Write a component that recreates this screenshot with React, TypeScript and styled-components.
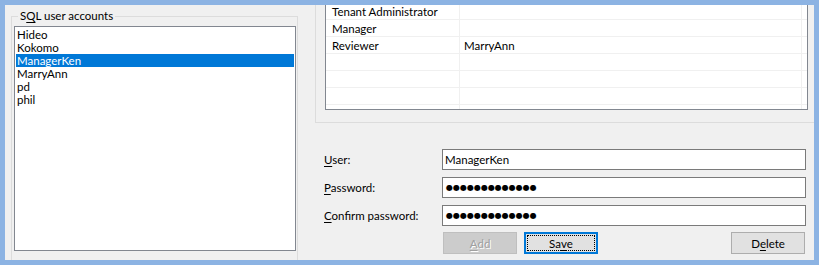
import styled, { createGlobalStyle } from "styled-components";

const GlobalStyle = createGlobalStyle`
  html, body {
    margin: 0;
    padding: 0;
    background: #8cb3e3;
  }
  * {
    box-sizing: border-box;
  }
`;

const accounts = ["Hideo", "Kokomo", "ManagerKen", "MarryAnn", "pd", "phil"];

const roles = [
  { role: "", user: "" },
  { role: "Tenant Administrator", user: "" },
  { role: "Manager", user: "" },
  { role: "Reviewer", user: "MarryAnn" },
  { role: "", user: "" },
  { role: "", user: "" },
  { role: "", user: "" },
  { role: "", user: "" },
];

const App = () => {
  return (
    <Frame>
      <GlobalStyle />
      <Body>
        <LeftGroup>
          <Legend>
            S<Key>Q</Key>L user accounts
          </Legend>
          <ListBox>
            {accounts.map((name) => (
              <ListItem key={name} selected={name === "ManagerKen"}>
                {name}
              </ListItem>
            ))}
          </ListBox>
        </LeftGroup>
        <RightPane>
          <RoleGroup>
            <RoleGrid>
              {roles.map((r, i) => (
                <GridRow key={i}>
                  <RoleCell>{r.role}</RoleCell>
                  <UserCell>{r.user}</UserCell>
                </GridRow>
              ))}
            </RoleGrid>
          </RoleGroup>
          <Form>
            <FieldRow>
              <Label>
                <Key>U</Key>ser:
              </Label>
              <Field>ManagerKen</Field>
            </FieldRow>
            <FieldRow>
              <Label>
                <Key>P</Key>assword:
              </Label>
              <Field>
                <Dots>{"●".repeat(13)}</Dots>
              </Field>
            </FieldRow>
            <FieldRow>
              <Label>
                <Key>C</Key>onfirm password:
              </Label>
              <Field>
                <Dots>{"●".repeat(13)}</Dots>
              </Field>
            </FieldRow>
            <ButtonRow>
              <Button disabled>
                <Key>A</Key>dd
              </Button>
              <Button focused>
                Sa<Key>v</Key>e
              </Button>
              <Spacer />
              <Button>
                D<Key>e</Key>lete
              </Button>
            </ButtonRow>
          </Form>
        </RightPane>
      </Body>
    </Frame>
  );
};

export default App;

const Frame = styled.div`
  width: 819px;
  height: 265px;
  padding: 5px;
  background: #8cb3e3;
  font-family: "Lato", "Liberation Sans", sans-serif;
  font-size: 11.5px;
  color: #000;
`;

const Body = styled.div`
  width: 809px;
  height: 255px;
  background: #f0f0f0;
  display: flex;
  overflow: hidden;
`;

const LeftGroup = styled.div`
  position: relative;
  margin: 11px 0 0 6px;
  width: 287px;
  height: 270px;
  flex-shrink: 0;
  border: 1px solid #dcdcdc;
  padding: 9px 1px 0 2px;
`;

const Legend = styled.div`
  position: absolute;
  top: -8px;
  left: 6px;
  padding: 0 2px;
  background: #f0f0f0;
  line-height: 14px;
`;

const Key = styled.span`
  text-decoration: underline;
  text-underline-offset: 2px;
`;

const ListBox = styled.div`
  width: 282px;
  height: 225px;
  background: #fff;
  border: 1px solid #828790;
  padding: 1px;
`;

const ListItem = styled.div<{ selected?: boolean }>`
  height: 13px;
  line-height: 13px;
  padding-left: 1px;
  white-space: nowrap;
  background: ${(p) => (p.selected ? "#0078d7" : "transparent")};
  color: ${(p) => (p.selected ? "#fff" : "#000")};
`;

const RightPane = styled.div`
  flex: 1;
  margin-left: 17px;
  display: flex;
  flex-direction: column;
`;

const RoleGroup = styled.div`
  margin-top: -20px;
  border-left: 1px solid #dcdcdc;
  border-bottom: 1px solid #dcdcdc;
  padding: 0 6px 12px 9px;
`;

const RoleGrid = styled.div`
  height: 125px;
  background: #fff;
  border: 1px solid #828790;
  overflow: hidden;
`;

const GridRow = styled.div`
  display: flex;
  height: 17px;
  border-bottom: 1px solid #f0f0f0;
`;

const RoleCell = styled.div`
  width: 134px;
  border-right: 1px solid #f0f0f0;
  padding-left: 6px;
  line-height: 17px;
  white-space: nowrap;
`;

const UserCell = styled.div`
  width: 342px;
  border-right: 1px solid #f0f0f0;
  padding-left: 4px;
  line-height: 17px;
  white-space: nowrap;
`;

const Form = styled.div`
  display: flex;
  flex-direction: column;
  gap: 7px;
  padding: 26px 8px 0 9px;
`;

const FieldRow = styled.div`
  display: flex;
  align-items: center;
`;

const Label = styled.div`
  width: 118px;
  white-space: nowrap;
`;

const Field = styled.div`
  flex: 1;
  height: 21px;
  background: #fff;
  border: 1px solid #7a7a7a;
  padding-left: 2px;
  line-height: 19px;
  white-space: nowrap;
`;

const Dots = styled.span`
  font-family: "DejaVu Sans", sans-serif;
  font-size: 8px;
  letter-spacing: 0;
  padding-left: 1px;
  vertical-align: top;
`;

const ButtonRow = styled.div`
  display: flex;
  gap: 7px;
  padding-left: 119px;
  margin-top: -1px;
  padding-right: 1px;
`;

const Spacer = styled.div`
  flex: 1;
`;

const Button = styled.div<{ disabled?: boolean; focused?: boolean }>`
  position: relative;
  width: 74px;
  height: 22px;
  display: flex;
  align-items: center;
  justify-content: center;
  font-family: inherit;
  font-size: 11.5px;
  background: ${(p) => (p.disabled ? "#cccccc" : "#e1e1e1")};
  border: ${(p) =>
    p.focused ? "2px solid #0078d7" : p.disabled ? "1px solid #bfbfbf" : "1px solid #adadad"};
  color: ${(p) => (p.disabled ? "#a0a0a0" : "#000")};
  text-shadow: ${(p) => (p.disabled ? "1px 1px 0 #fff" : "none")};

  &::after {
    content: "";
    display: ${(p) => (p.focused ? "block" : "none")};
    position: absolute;
    inset: 1px;
    border: 1px dotted #000;
  }
`;
